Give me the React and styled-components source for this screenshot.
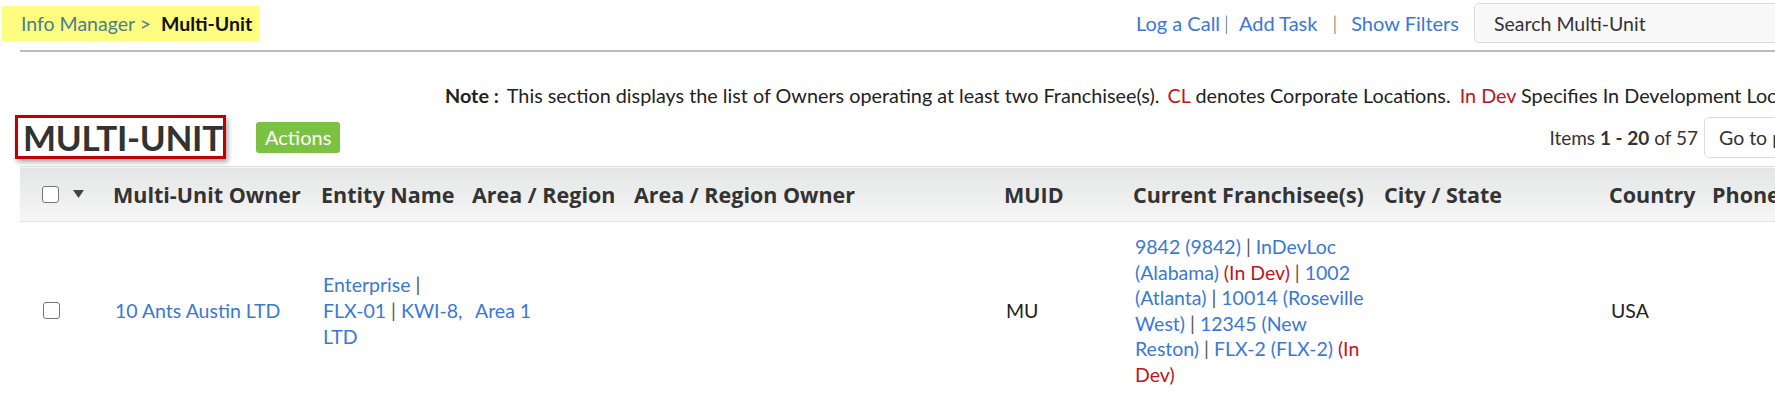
import React from "react";
import styled, { createGlobalStyle } from "styled-components";

const GlobalStyle = createGlobalStyle`
  html, body {
    margin: 0;
    padding: 0;
    overflow: hidden;
    background: #fff;
  }
  body {
    font-family: Lato, "Open Sans", sans-serif;
    font-size: 19.5px;
    color: #222;
  }
`;

const Page = styled.div`
  width: 1894px;
`;

const TopBar = styled.div`
  display: flex;
  align-items: center;
  justify-content: space-between;
  height: 46px;
  padding-left: 2px;
`;

const Breadcrumb = styled.div`
  display: flex;
  align-items: center;
  height: 35px;
  padding: 0 7px 0 19px;
  background: #fdfd80;
  font-size: 19.5px;
`;

const Crumb = styled.span`
  color: #4b7e93;
  margin-right: 10px;
`;

const CrumbCurrent = styled.span`
  color: #111;
  font-weight: 700;
`;

const TopActions = styled.div`
  display: flex;
  align-items: center;
`;

const TopLink = styled.a`
  color: #3a78d6;
  text-decoration: none;
  font-size: 20px;
  cursor: pointer;
`;

const Pipe = styled.span`
  color: #555;
  margin: ${(p) => p.$space || "0 4px"};
  font-weight: 300;
  font-size: 20px;
`;

const SearchBox = styled.div`
  box-sizing: border-box;
  width: 420px;
  height: 40px;
  margin-left: 15px;
  padding-left: 19px;
  display: flex;
  align-items: center;
  background: #f8f8f8;
  border: 1px solid #dcdcdc;
  border-radius: 5px;
  color: #333;
  font-size: 19.5px;
`;

const Divider = styled.div`
  margin: 4px 0 0 20px;
  height: 2px;
  background: #bbb;
`;

const NoteRow = styled.div`
  margin-top: 31px;
  padding-left: 445px;
  line-height: 24px;
  white-space: nowrap;
  font-size: 19.8px;
  color: #222;
`;

const NoteLabel = styled.b`
  font-weight: 700;
  margin-right: 8px;
`;

const Red = styled.span`
  color: #c0141c;
  margin-left: ${(p) => p.$gap || "0"};
`;

const TitleRow = styled.div`
  display: flex;
  align-items: center;
  margin: 8px 0 0 15px;
  height: 44px;
`;

const Heading = styled.h1`
  box-sizing: border-box;
  margin: 0;
  height: 44px;
  width: 211px;
  padding-left: 5px;
  display: flex;
  align-items: center;
  white-space: nowrap;
  border: 3px solid #c00000;
  box-shadow: 2px 3px 5px rgba(0, 0, 0, 0.35);
  font-family: Lato, sans-serif;
  font-size: 35px;
  font-weight: 700;
  letter-spacing: -0.3px;
  color: #333;
`;

const ActionsButton = styled.button`
  margin-left: 30px;
  height: 31px;
  padding: 0 9px;
  border: none;
  border-radius: 3px;
  background: #7cc242;
  color: #fff;
  font-family: Lato, sans-serif;
  font-size: 20px;
`;

const Pager = styled.div`
  margin-left: auto;
  display: flex;
  align-items: center;
  color: #333;
  font-size: 19px;
`;

const GoTo = styled.div`
  box-sizing: border-box;
  width: 190px;
  height: 41px;
  margin-left: 6px;
  padding-left: 14px;
  display: flex;
  align-items: center;
  border: 1px solid #ddd;
  border-radius: 5px;
  color: #333;
  font-size: 19.5px;
`;

const Table = styled.table`
  margin: 7px 0 0 20px;
  border-collapse: collapse;
  table-layout: fixed;
  width: 1882px;
`;

const HeadRow = styled.tr`
  height: 55px;
  background: linear-gradient(#e4e5e5, #f6f6f6);
  border-top: 1px solid #dedede;
  border-bottom: 1px solid #e2e2e2;
`;

const Th = styled.th`
  text-align: left;
  padding: 0 10px 0 ${(p) => p.$pl || "10px"};
  font-family: "Open Sans", sans-serif;
  font-size: 21.5px;
  font-weight: 700;
  color: #333;
  white-space: nowrap;
`;

const Td = styled.td`
  vertical-align: middle;
  padding: 12px ${(p) => p.$pr || "10px"} 12px ${(p) => p.$pl || "12px"};
  line-height: 25.6px;
  font-size: 19.5px;
  color: ${(p) => (p.$link ? "#3a78d6" : "#222")};
`;

const CheckCell = styled.div`
  display: flex;
  align-items: center;
  padding-left: ${(p) => p.$pad || "22px"};
`;

const Box = styled.span`
  display: inline-block;
  box-sizing: border-box;
  width: 17px;
  height: 17px;
  border: 1.5px solid #777;
  border-radius: 3px;
  background: #fff;
`;

const Caret = styled.svg`
  margin-left: 14px;
  width: 11px;
  height: 8px;
`;

const Sep = styled.span`
  color: #555;
`;

const NoBreak = styled.span`
  white-space: nowrap;
`;

const cols = [83, 208, 159, 154, 370, 129, 251, 225, 103, 200];
const headers = [
  { label: "Multi-Unit Owner" },
  { label: "Entity Name" },
  { label: "Area / Region", pl: "2px" },
  { label: "Area / Region Owner" },
  { label: "MUID" },
  { label: "Current Franchisee(s)" },
  { label: "City / State" },
  { label: "Country" },
  { label: "Phone" },
];

const franchisees = [
  { text: "9842 (9842)" },
  { text: "InDevLoc (Alabama)", dev: true },
  { text: "1002 (Atlanta)" },
  { text: "10014 (Roseville West)" },
  { text: "12345 (New Reston)" },
  { text: "FLX-2 (FLX-2)", dev: true, keep: true },
];

const App = () => (
  <>
    <GlobalStyle />
    <Page>
      <TopBar>
        <Breadcrumb>
          <Crumb>Info Manager &gt;</Crumb>
          <CrumbCurrent>Multi-Unit</CrumbCurrent>
        </Breadcrumb>
        <TopActions>
          <TopLink>Log a Call</TopLink>
          <Pipe $space="0 10px 0 4px">|</Pipe>
          <TopLink>Add Task</TopLink>
          <Pipe $space="0 14px 0 15px">|</Pipe>
          <TopLink>Show Filters</TopLink>
          <SearchBox>Search Multi-Unit</SearchBox>
        </TopActions>
      </TopBar>
      <Divider />
      <NoteRow>
        <NoteLabel>Note :</NoteLabel>
        This section displays the list of Owners operating at least two Franchisee(s).{" "}
        <Red $gap="3px">CL</Red> denotes Corporate Locations.{" "}
        <Red $gap="4px">In Dev</Red> Specifies In Development Locations.
      </NoteRow>
      <TitleRow>
        <Heading>MULTI-UNIT</Heading>
        <ActionsButton>Actions</ActionsButton>
        <Pager>
          <span>
            Items <b>1 - 20</b> of 57
          </span>
          <GoTo>Go to page</GoTo>
        </Pager>
      </TitleRow>
      <Table>
        <colgroup>
          {cols.map((w, i) => (
            <col key={i} style={{ width: w }} />
          ))}
        </colgroup>
        <thead>
          <HeadRow>
            <th style={{ padding: 0 }}>
              <CheckCell>
                <Box />
                <Caret viewBox="0 0 11 8">
                  <polygon points="0,0 11,0 5.5,8" fill="#444" />
                </Caret>
              </CheckCell>
            </th>
            {headers.map((h) => (
              <Th key={h.label} $pl={h.pl}>
                {h.label}
              </Th>
            ))}
            <Th />
          </HeadRow>
        </thead>
        <tbody>
          <tr>
            <td style={{ padding: 0 }}>
              <CheckCell $pad="23px">
                <Box />
              </CheckCell>
            </td>
            <Td $link>10 Ants Austin LTD</Td>
            <Td $link $pr="0">
              Enterprise <Sep>|</Sep> <NoBreak>FLX-01</NoBreak> <Sep>|</Sep>{" "}
              <NoBreak>KWI-8,</NoBreak> LTD
            </Td>
            <Td $link $pl="5px">
              Area 1
            </Td>
            <Td />
            <Td>MU</Td>
            <Td $link>
              {franchisees.map((f, i) => (
                <React.Fragment key={i}>
                  {i > 0 && <Sep> | </Sep>}
                  {f.keep ? <NoBreak>{f.text}</NoBreak> : f.text}
                  {f.dev && <Red> (In Dev)</Red>}
                </React.Fragment>
              ))}
            </Td>
            <Td />
            <Td>USA</Td>
            <Td />
            <Td />
          </tr>
        </tbody>
      </Table>
    </Page>
  </>
);

export default App;
